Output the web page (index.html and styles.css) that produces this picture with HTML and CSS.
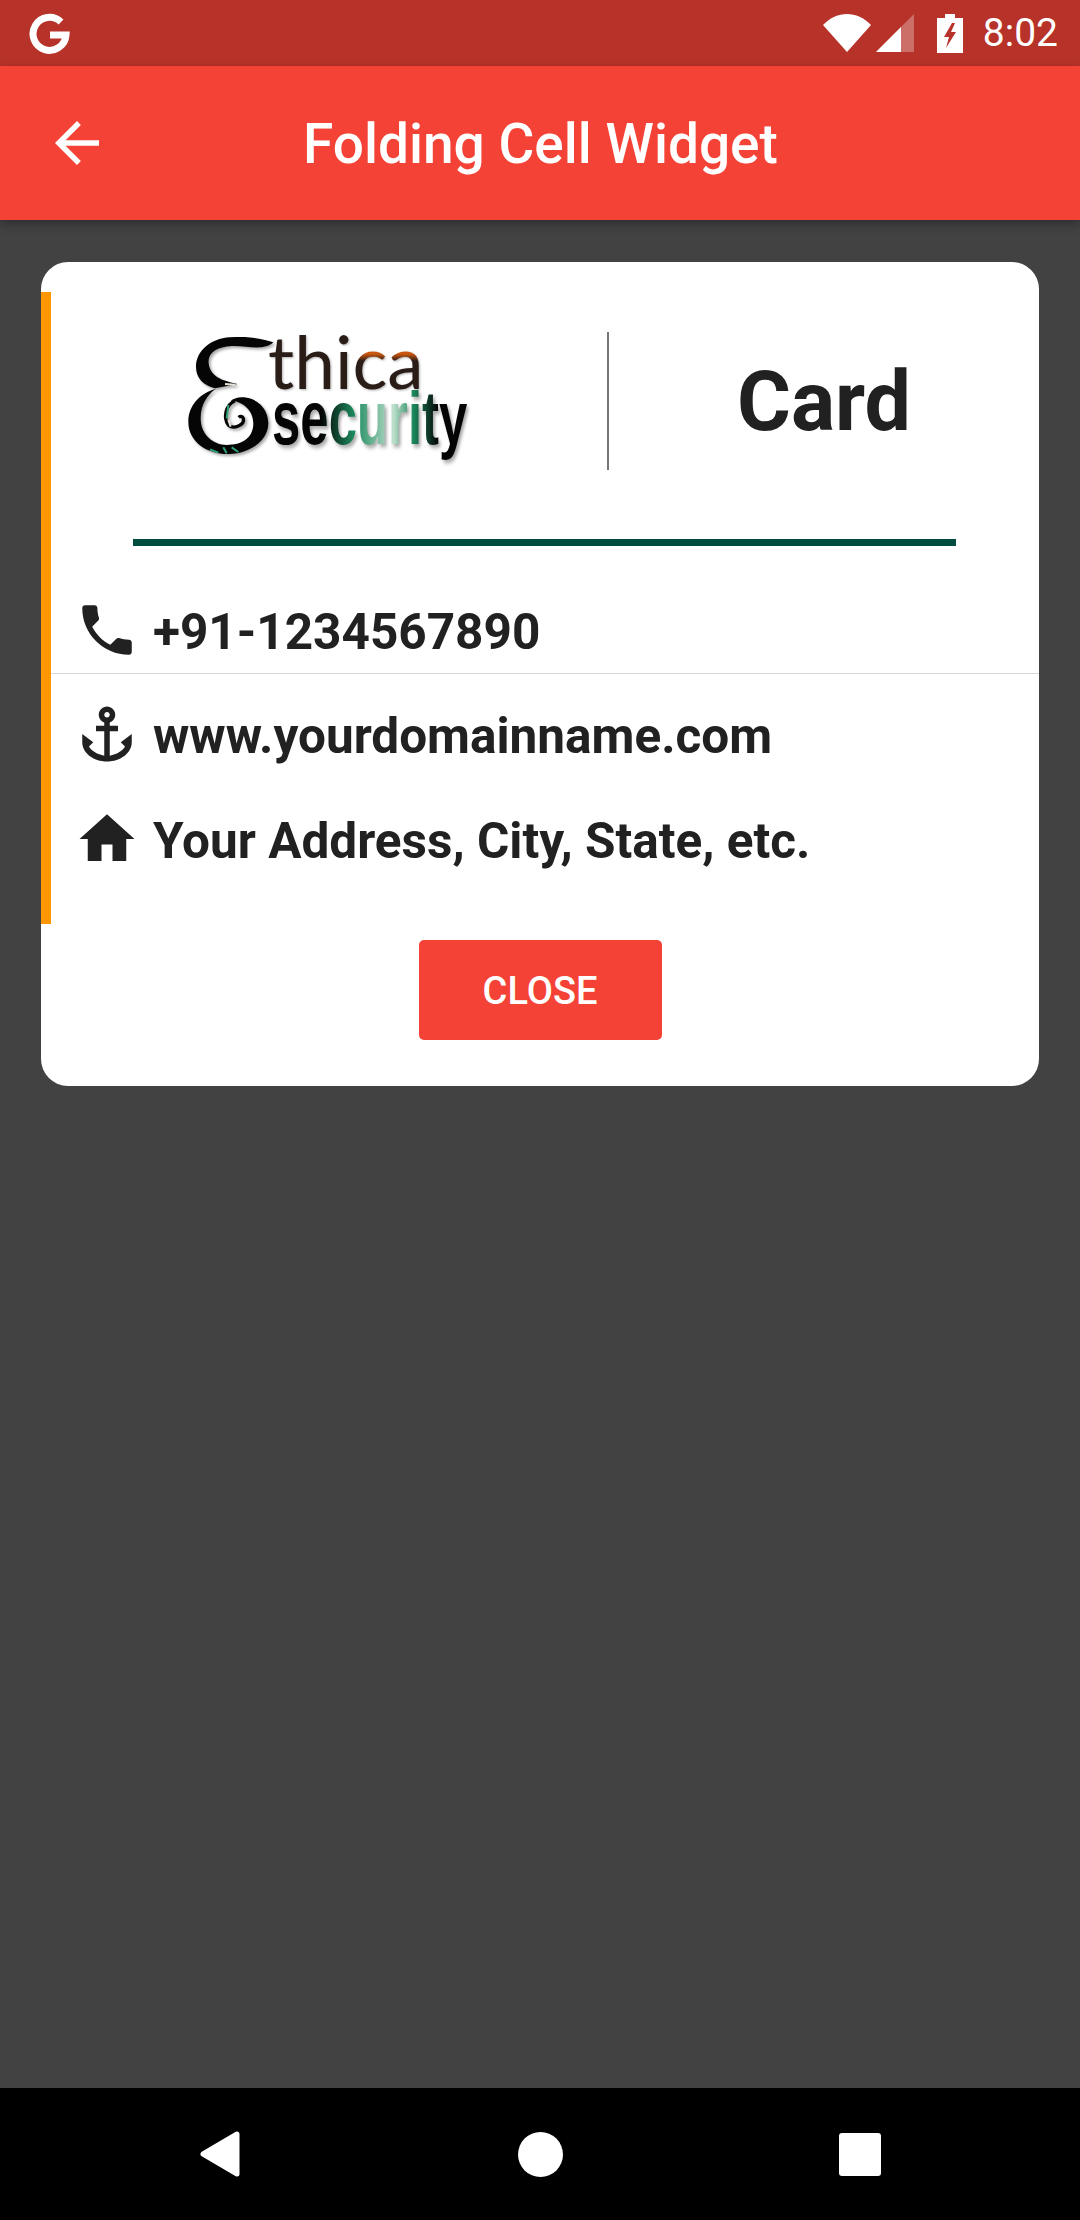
FILE: index.html
```html
<!DOCTYPE html>
<html>
	<head>
		<meta charset="UTF-8">
		<title>Folding Cell Widget</title>
		<link rel="stylesheet" href="styles.css">
	</head>
	<body>
		<div class="status">
			<svg class="g-logo" width="44" height="44" viewBox="0 0 44 44">
				<path d="M33 11 A16.500 16.500 0 1 0 38 24 L22 24" fill="none" stroke="#fff" stroke-width="7"/>
			</svg>
			<div class="status-right">
				<svg width="48" height="38" viewBox="0 0 48 38"><path d="M0 11 C14 -3.600 34 -3.600 48 11 L24 38 Z" fill="#fff"/></svg>
				<svg class="signal" width="38" height="38" viewBox="0 0 38 38">
					<path d="M0 38 L38 0 V38 Z" fill="#fff" opacity=".3"/>
					<path d="M0 38 L25 13 V38 Z" fill="#fff"/>
				</svg>
				<svg class="battery" width="26" height="39" viewBox="0 0 26 39">
					<path fill-rule="evenodd" d="M8 0 H18 V4 H26 V39 H0 V4 H8 Z M15 9 L7 23 H12 L9 34 L19 18 H14 L18 9 Z" fill="#fff"/>
				</svg>
				<span class="time">8:02</span>
			</div>
		</div>

		<div class="appbar">
			<svg class="back" width="66" height="66" viewBox="0 0 24 24"><path d="M20 11H7.830l5.590-5.590L12 4l-8 8 8 8 1.410-1.410L7.830 13H20v-2z" fill="#fff"/></svg>
			<div class="title">Folding Cell Widget</div>
		</div>

		<div class="content">
			<div class="card">
				<div class="inner">
					<div class="head">
						<div class="logo-cell">
							<div class="logo">
								<svg class="logo-e" width="320" height="160" viewBox="0 0 960 480">
									<path d="M340 97 C290 80 250 80 210 82 C150 85 108 125 108 170 C108 205 130 225 165 235 L232 222 C200 215 150 205 146 160 C142 130 170 110 215 108 C260 106 310 125 340 97 Z" fill="#050505"/>
									<path d="M168 236 C120 250 85 285 85 335 C85 395 140 432 205 432 C265 432 325 395 325 340 C325 295 290 262 245 262 C232 262 222 266 212 272 C240 272 280 295 280 340 C280 385 245 405 200 405 C160 405 122 375 122 325 C122 285 140 255 168 236 Z" fill="#050505"/>
									<path d="M225 272 C195 285 190 325 205 345 C220 360 255 345 250 325 C248 318 240 318 236 322" fill="none" stroke="#050505" stroke-width="10"/>
									<path d="M150 418 L175 428 M190 412 L200 430 M215 412 L235 426 M205 285 L200 325" fill="none" stroke="#2fa377" stroke-width="6"/>
									<path d="M195 222 L225 224 M205 330 L212 350" fill="none" stroke="#e8e4da" stroke-width="6"/>
								</svg>
								<span class="logo-thica">thi<span class="logo-orange">ca</span></span>
								<span class="logo-security">security</span>
							</div>
						</div>
						<div class="head-line"></div>
						<div class="head-text">Card</div>
					</div>
					<div class="green-line"></div>

					<div class="row row-phone">
						<svg width="66" height="66" viewBox="0 0 24 24"><path d="M6.620 10.790c1.440 2.830 3.760 5.140 6.590 6.590l2.200-2.200c.27-.27.67-.36 1.020-.24 1.120.37 2.330.57 3.570.57.55 0 1 .45 1 1V20c0 .55-.45 1-1 1-9.390 0-17-7.610-17-17 0-.55.45-1 1-1h3.500c.55 0 1 .45 1 1 0 1.250.2 2.450.57 3.570.11.35.03.74-.25 1.020l-2.200 2.200z"/></svg>
						<span>+91-1234567890</span>
					</div>
					<div class="row row-web">
						<svg width="66" height="66" viewBox="0 0 24 24"><path d="M17 15l1.550 1.550c-.96 1.690-3.020 2.900-5.550 3.320V11h3V9h-3V7.820C14.160 7.400 15 6.300 15 5c0-1.650-1.350-3-3-3S9 3.350 9 5c0 1.300.84 2.400 2 2.820V9H8v2h3v8.870c-2.530-.42-4.590-1.630-5.550-3.320L7 15l-4-3v3c0 3.880 4.030 7 9 7s9-3.120 9-7v-3l-4 3zM12 4c.55 0 1 .45 1 1s-.45 1-1 1-1-.45-1-1 .45-1 1-1z"/></svg>
						<span>www.yourdomainname.com</span>
					</div>
					<div class="row row-home">
						<svg width="66" height="66" viewBox="0 0 24 24"><path d="M10 20v-6h4v6h5v-8h3L12 3 2 12h3v8z"/></svg>
						<span>Your Address, City, State, etc.</span>
					</div>
				</div>
				<div class="btn">CLOSE</div>
			</div>
		</div>

		<div class="nav">
			<div class="nav-cell">
				<svg width="44" height="50" viewBox="0 0 44 50"><path d="M39 5 V45 L5 25 Z" fill="#fff" stroke="#fff" stroke-width="5" stroke-linejoin="round"/></svg>
			</div>
			<div class="nav-cell"><div class="nav-circle"></div></div>
			<div class="nav-cell"><div class="nav-square"></div></div>
		</div>
	</body>
</html>
```

FILE: styles.css
```css
* {
	margin: 0;
	padding: 0;
	box-sizing: border-box;
}

body {
	width: 1080px;
	height: 2220px;
	display: flex;
	flex-direction: column;
	background: #424242;
	font-family: Roboto, "Liberation Sans", sans-serif;
	overflow: hidden;
}

.status {
	height: 66px;
	background: #b73229;
	display: flex;
	align-items: center;
	justify-content: space-between;
	padding: 0 22px 0 28px;
	color: #fff;
}

.status-right {
	display: flex;
	align-items: center;
}

.signal {
	margin-left: 5px;
}

.battery {
	margin-left: 23px;
}

.time {
	margin-left: 20px;
	font-size: 39px;
}

.appbar {
	height: 154px;
	background: #f44336;
	display: flex;
	align-items: center;
	padding-left: 44px;
	box-shadow: 0 4px 10px rgba(0, 0, 0, 0.3);
	position: relative;
}

.title {
	margin-left: 193px;
	padding-top: 2px;
	font-size: 55px;
	font-weight: 500;
	color: #fff;
}

.content {
	flex: 1;
	padding: 42px 41px 0;
}

.card {
	background: #fff;
	border-radius: 27px;
	height: 824px;
	padding-top: 30px;
}

.inner {
	height: 632px;
	border-left: 10px solid #ff9800;
}

.head {
	height: 247px;
	display: flex;
	align-items: center;
	padding-bottom: 29px;
}

.logo-cell {
	width: 556px;
	display: flex;
	justify-content: center;
	padding-right: 18px;
}

.logo {
	width: 320px;
	height: 160px;
	margin-bottom: 22px;
	position: relative;
}

.logo-e {
	position: absolute;
	left: 0;
	top: 0;
	filter: drop-shadow(2px 2px 1.5px rgba(0, 0, 0, 0.35));
}

.logo-thica {
	position: absolute;
	left: 108px;
	top: 22px;
	font-family: Lato, sans-serif;
	font-size: 73px;
	line-height: 58px;
	color: #2a1c16;
	filter: drop-shadow(1px 1px 1px rgba(0, 0, 0, 0.3));
}

.logo-orange {
	background: linear-gradient(180deg, #c9570f 0, #c9570f 42%, #2a1c16 50%, #2a1c16 100%);
	-webkit-background-clip: text;
	background-clip: text;
	color: transparent;
}

.logo-security {
	position: absolute;
	left: 112px;
	top: 80px;
	padding-bottom: 18px;
	font-family: "Liberation Sans", sans-serif;
	font-size: 76px;
	font-weight: 700;
	line-height: 56px;
	transform: scaleX(0.67);
	transform-origin: left top;
	background: linear-gradient(90deg, #050505 0, #050505 25%, #1d8a5e 42%, #bfe0cc 62%, #1d8a5e 72%, #050505 85%);
	-webkit-background-clip: text;
	background-clip: text;
	color: transparent;
	filter: drop-shadow(3px 3px 2px rgba(0, 0, 0, 0.35));
}

.head-line {
	width: 2px;
	height: 138px;
	background: #757575;
}

.head-text {
	flex: 1;
	text-align: center;
	font-size: 82.5px;
	font-weight: 700;
	color: #212121;
}

.green-line {
	height: 7px;
	margin: 0 83px 0 82px;
	background: #004d40;
}

.row {
	display: flex;
	align-items: center;
	padding-left: 23px;
	font-size: 49.5px;
	font-weight: 700;
	color: #212121;
}

.row svg {
	flex: none;
	margin-right: 13px;
	fill: #212121;
}

.row span {
	padding-top: 3px;
}

.row-phone {
	margin-top: 51px;
	padding-bottom: 10px;
	border-bottom: 1px solid #d8d8d8;
}

.row-web {
	margin-top: 27px;
}

.row-home {
	margin-top: 39px;
}

.btn {
	width: 243px;
	height: 100px;
	margin: 16px auto 0;
	padding-top: 2px;
	background: #f44336;
	border-radius: 5px;
	color: #fff;
	font-size: 38px;
	font-weight: 500;
	display: flex;
	align-items: center;
	justify-content: center;
}

.nav {
	height: 132px;
	background: #000;
	display: grid;
	grid-template-columns: repeat(3, 320px);
	justify-content: center;
	align-items: center;
}

.nav-cell {
	display: flex;
	justify-content: center;
}

.nav-circle {
	width: 45px;
	height: 45px;
	border-radius: 50%;
	background: #fff;
}

.nav-square {
	width: 42px;
	height: 43px;
	border-radius: 3px;
	background: #fff;
}
```
